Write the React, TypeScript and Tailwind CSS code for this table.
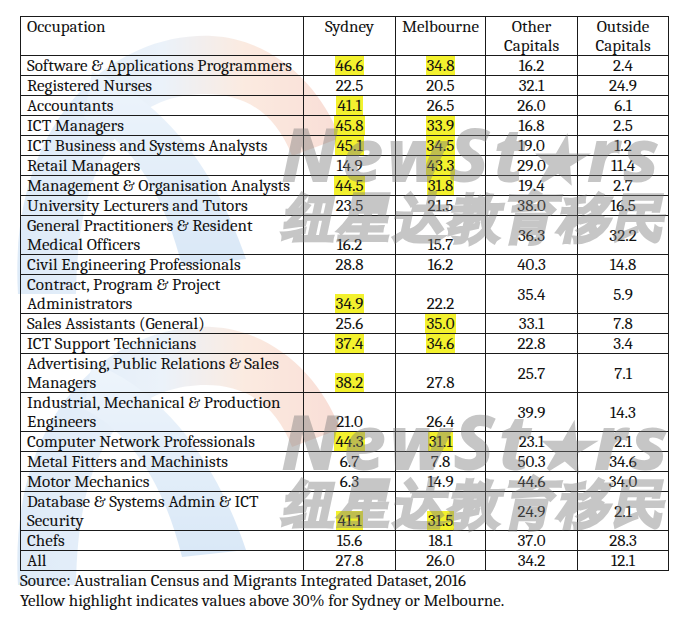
import React from "react";

type Row = {
  occ: string[];
  syd: string;
  sydHi?: boolean;
  mel: string;
  melHi?: boolean;
  oth: string;
  out: string;
};

const rows: Row[] = [
  { occ: ["Software & Applications Programmers"], syd: "46.6", sydHi: true, mel: "34.8", melHi: true, oth: "16.2", out: "2.4" },
  { occ: ["Registered Nurses"], syd: "22.5", mel: "20.5", oth: "32.1", out: "24.9" },
  { occ: ["Accountants"], syd: "41.1", sydHi: true, mel: "26.5", oth: "26.0", out: "6.1" },
  { occ: ["ICT Managers"], syd: "45.8", sydHi: true, mel: "33.9", melHi: true, oth: "16.8", out: "2.5" },
  { occ: ["ICT Business and Systems Analysts"], syd: "45.1", sydHi: true, mel: "34.5", melHi: true, oth: "19.0", out: "1.2" },
  { occ: ["Retail Managers"], syd: "14.9", mel: "43.3", melHi: true, oth: "29.0", out: "11.4" },
  { occ: ["Management & Organisation Analysts"], syd: "44.5", sydHi: true, mel: "31.8", melHi: true, oth: "19.4", out: "2.7" },
  { occ: ["University Lecturers and Tutors"], syd: "23.5", mel: "21.5", oth: "38.0", out: "16.5" },
  { occ: ["General Practitioners & Resident", "Medical Officers"], syd: "16.2", mel: "15.7", oth: "36.3", out: "32.2" },
  { occ: ["Civil Engineering Professionals"], syd: "28.8", mel: "16.2", oth: "40.3", out: "14.8" },
  { occ: ["Contract, Program & Project", "Administrators"], syd: "34.9", sydHi: true, mel: "22.2", oth: "35.4", out: "5.9" },
  { occ: ["Sales Assistants (General)"], syd: "25.6", mel: "35.0", melHi: true, oth: "33.1", out: "7.8" },
  { occ: ["ICT Support Technicians"], syd: "37.4", sydHi: true, mel: "34.6", melHi: true, oth: "22.8", out: "3.4" },
  { occ: ["Advertising, Public Relations & Sales", "Managers"], syd: "38.2", sydHi: true, mel: "27.8", oth: "25.7", out: "7.1" },
  { occ: ["Industrial, Mechanical & Production", "Engineers"], syd: "21.0", mel: "26.4", oth: "39.9", out: "14.3" },
  { occ: ["Computer Network Professionals"], syd: "44.3", sydHi: true, mel: "31.1", melHi: true, oth: "23.1", out: "2.1" },
  { occ: ["Metal Fitters and Machinists"], syd: "6.7", mel: "7.8", oth: "50.3", out: "34.6" },
  { occ: ["Motor Mechanics"], syd: "6.3", mel: "14.9", oth: "44.6", out: "34.0" },
  { occ: ["Database & Systems Admin & ICT", "Security"], syd: "41.1", sydHi: true, mel: "31.5", melHi: true, oth: "24.9", out: "2.1" },
  { occ: ["Chefs"], syd: "15.6", mel: "18.1", oth: "37.0", out: "28.3" },
  { occ: ["All"], syd: "27.8", mel: "26.0", oth: "34.2", out: "12.1" },
];

function Value({ v, hi }: { v: string; hi?: boolean }) {
  if (!hi) return <>{v}</>;
  return <span className="inline-block bg-[#f3f12e] px-[1px] leading-[19px]">{v}</span>;
}

function LogoMark({ className }: { className: string }) {
  return (
    <svg viewBox="0 0 340 290" className={className} aria-hidden>
      <defs>
        <linearGradient id="arch" x1="0" y1="0" x2="1" y2="0">
          <stop offset="0" stopColor="#8ab8e8" />
          <stop offset="0.45" stopColor="#b9d2ee" />
          <stop offset="0.7" stopColor="#f2b894" />
          <stop offset="1" stopColor="#ec8a70" />
        </linearGradient>
        <linearGradient id="stroke" x1="0" y1="0" x2="0" y2="1">
          <stop offset="0" stopColor="#c4dcf4" />
          <stop offset="1" stopColor="#7aaee4" />
        </linearGradient>
      </defs>
      <path
        d="M18 280 C8 110 110 18 212 22 C272 25 320 70 340 124 L292 142 C276 100 246 80 206 80 C136 80 78 130 76 280 Z"
        fill="url(#arch)"
      />
      <path d="M92 58 C158 82 214 150 246 245 L182 252 C164 180 132 128 84 104 Z" fill="url(#stroke)" />
    </svg>
  );
}

function WordMark({ top, chTop, size }: { top: string; chTop: string; size: string }) {
  return (
    <>
      <div
        className={`absolute left-[282px] ${top} ${size} whitespace-nowrap font-sans font-bold italic leading-none tracking-[6px] text-[#7a7a7a] opacity-[0.42] [-webkit-text-stroke:2px_#7a7a7a]`}
      >
        NewSt<span className="text-[0.8em]">★</span>rs
      </div>
      <div
        className={`absolute left-[286px] ${chTop} -skew-x-12 whitespace-nowrap font-sans text-[52px] font-bold leading-none tracking-[3px] text-[#7a7a7a] opacity-[0.42] [-webkit-text-stroke:3px_#7a7a7a]`}
      >
        纽星达教育移民
      </div>
    </>
  );
}

export default function App() {
  const cell = "border border-[#1a1a1a] p-0 leading-[19px]";
  return (
    <div className="relative h-[619px] w-[681px] overflow-hidden bg-white font-serif text-[17px] text-[#111]">
      <LogoMark className="absolute left-0 top-[14px] h-[290px] w-[340px] opacity-[0.28]" />
      <LogoMark className="absolute left-0 top-[305px] h-[290px] w-[340px] opacity-[0.28]" />

      <div className="relative pl-[20px] pt-[16px]">
        <table className="w-[649px] table-fixed border-collapse">
          <colgroup>
            <col className="w-[283px]" />
            <col className="w-[92px]" />
            <col className="w-[90px]" />
            <col className="w-[92px]" />
            <col className="w-[91px]" />
          </colgroup>
          <thead>
            <tr>
              <th className={`${cell} h-[39px] pl-[6px] text-left align-top font-normal`}>Occupation</th>
              <th className={`${cell} text-center align-top font-normal`}>Sydney</th>
              <th className={`${cell} text-center align-top font-normal`}>Melbourne</th>
              <th className={`${cell} text-center align-top font-normal`}>
                Other
                <br />
                Capitals
              </th>
              <th className={`${cell} text-center align-top font-normal`}>
                Outside
                <br />
                Capitals
              </th>
            </tr>
          </thead>
          <tbody>
            {rows.map((r) => (
              <tr key={r.occ.join(" ")}>
                <td className={`${cell} pl-[6px] text-left align-top`}>
                  {r.occ.map((line, i) => (
                    <div key={i}>{line}</div>
                  ))}
                </td>
                <td className={`${cell} text-center align-bottom`}>
                  <Value v={r.syd} hi={r.sydHi} />
                </td>
                <td className={`${cell} text-center align-bottom`}>
                  <Value v={r.mel} hi={r.melHi} />
                </td>
                <td className={`${cell} text-center align-middle`}>{r.oth}</td>
                <td className={`${cell} text-center align-middle`}>{r.out}</td>
              </tr>
            ))}
          </tbody>
        </table>
        <p className="leading-[20px]">Source: Australian Census and Migrants Integrated Dataset, 2016</p>
        <p className="leading-[20px]">Yellow highlight indicates values above 30% for Sydney or Melbourne.</p>
      </div>

      <div className="pointer-events-none">
        <WordMark top="top-[117px]" chTop="top-[190px]" size="text-[72px]" />
        <WordMark top="top-[404px]" chTop="top-[476px]" size="text-[74px]" />
      </div>
    </div>
  );
}
